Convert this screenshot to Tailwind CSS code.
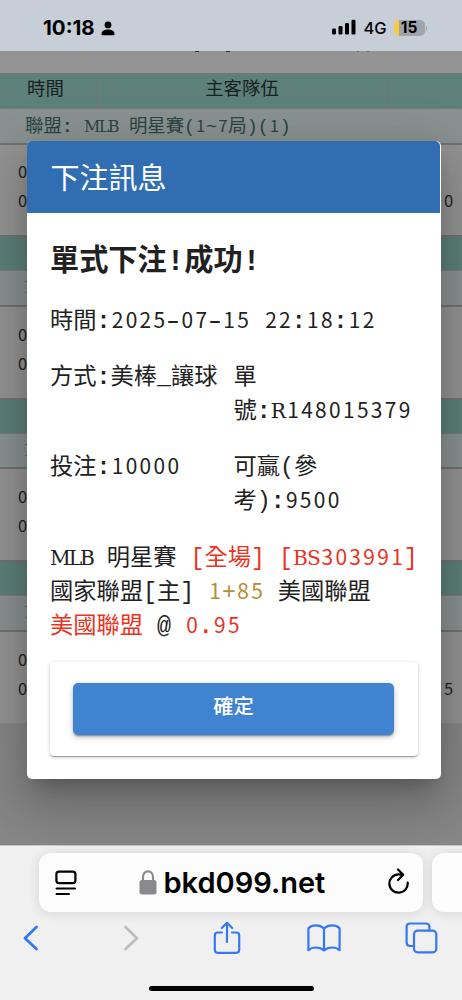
<!DOCTYPE html>
<html lang="zh-Hant">
<head>
<meta charset="utf-8">
<title>下注訊息</title>
<script src="https://cdn.jsdelivr.net/npm/@tailwindcss/browser@4"></script>
</head>
<body class="w-[462px] h-[1000px] overflow-hidden bg-[#868686]">
<!-- i = digit run, b = slab-serif letter run, s = heavier punctuation, em = wide dash -->
<div class="relative w-[462px] h-[1000px] flex flex-col overflow-hidden font-['Liberation_Mono','Noto_Sans_CJK_TC',monospace] [&_i]:not-italic [&_i]:font-['Noto_Sans_CJK_TC',sans-serif] [&_i]:text-[0.9em] [&_i]:leading-0 [&_i]:tracking-[0.1117em] [&_i]:pl-[0.06em] [&_i]:mr-[-0.06em] [&_b]:font-normal [&_b]:font-['DejaVu_Serif',serif] [&_b]:text-[0.87em] [&_b]:leading-0 [&_s]:no-underline [&_s]:font-bold [&_s]:leading-0 [&_em]:not-italic [&_em]:inline-block [&_em]:scale-x-150">

  <header class="h-[51px] shrink-0 bg-[#c8ced7] flex items-start justify-between pl-[43px] pr-[35px] pt-[16px] font-['Inter',sans-serif] text-black">
    <div class="flex items-center h-6 gap-[6px]">
      <span class="text-[20.5px] font-bold leading-6 tracking-[0px]">10:18</span>
      <svg class="w-[14px] h-[15px]" viewBox="0 0 14 15"><circle cx="7" cy="3.9" r="3.4"/><path d="M.5 13.2C.5 10 3 8.500 7 8.500s6.500 1.500 6.500 4.700c0 .7-.4 1.100-1.100 1.100H1.600c-.7 0-1.100-.4-1.100-1.100Z"/></svg>
    </div>
    <div class="flex items-center h-6">
      <svg class="w-[25px] h-[16px] mt-[-2px]" viewBox="0 0 25 16"><rect x="0" y="9.500" width="4" height="6" rx="1.200"/><rect x="6.500" y="7" width="4" height="8.500" rx="1.200"/><rect x="13" y="4" width="4" height="11.500" rx="1.200"/><rect x="19.500" y="0.700" width="4" height="14.800" rx="1.200"/></svg>
      <span class="ml-[7px] text-[16.5px] leading-6 font-medium w-[23px]">4G</span>
      <span class="ml-[7px] w-[31px] h-4 rounded-[5px] bg-linear-to-r from-[#f5cb45] from-[16%] to-[#a0a3aa] to-[16%] flex items-center justify-center text-[15.5px] font-bold">15</span>
      <span class="ml-px w-[1.5px] h-[5px] rounded-r bg-[#a0a3aa]"></span>
    </div>
  </header>

  <main class="h-[793.500px] shrink-0 bg-[#868686] text-[18.4px] text-[#242424] leading-[29px]">
    <div class="h-[21.500px] bg-[#949494] flex items-start">
      <span class="ml-[195px] w-1 h-px bg-[#333]"></span><span class="ml-[27px] w-1 h-px bg-[#333]"></span>
      <span class="ml-[127px] w-[2px] h-px bg-[#666]"></span><span class="ml-[8px] w-[2px] h-px bg-[#666]"></span>
    </div>
    <section class="h-[162.500px] bg-[#939393]">
      <div class="h-[35.500px] bg-[#5d807a] border-t border-[#737373] flex leading-[33px] text-[#191f1e] text-center">
        <div class="w-[97px] border-r border-[#737373] pr-[5px]">時間</div>
        <div class="w-[291px] border-r border-[#737373]">主客隊伍</div>
      </div>
      <div class="h-[36.500px] bg-[#8a9291] border-t border-b-2 border-t-[#7b7b7b] border-b-[#717171] pl-[25px] leading-[37px] text-[#294543] whitespace-pre">聯盟<s>:</s> <b class="tracking-[-0.1em]">MLB</b> 明星賽(<i>1</i>~<i>7</i>局)(<i>1</i>)</div>
      <div class="flex justify-between pl-[17px] pr-[8px] pt-[14px]"><div><i>0</i><br><i>0</i></div><div class="pt-[29px]"><i>0</i></div></div>
    </section>
    <section class="h-[162.500px] bg-[#939393]">
      <div class="h-[35px] bg-[#5d807a] border-t-2 border-[#737373]"></div>
      <div class="h-[36.500px] bg-[#8a9291] border-t border-b-2 border-t-[#7b7b7b] border-b-[#717171] pl-[25px] leading-[35px] text-[#294543]"><b>M</b></div>
      <div class="pl-[17px] pt-[15px]"><i>0</i><br><i>0</i></div>
    </section>
    <section class="h-[162.500px] bg-[#939393]">
      <div class="h-[35px] bg-[#5d807a] border-t-2 border-[#737373]"></div>
      <div class="h-[36.500px] bg-[#8a9291] border-t border-b-2 border-t-[#7b7b7b] border-b-[#717171] pl-[25px] leading-[35px] text-[#294543]"><b>M</b></div>
      <div class="pl-[17px] pt-[15px]"><i>0</i><br><i>0</i></div>
    </section>
    <section class="h-[162.500px] bg-[#939393]">
      <div class="h-[35px] bg-[#5d807a] border-t-2 border-[#737373]"></div>
      <div class="h-[36.500px] bg-[#8a9291] border-t border-b-2 border-t-[#7b7b7b] border-b-[#717171] pl-[25px] leading-[35px] text-[#294543]"><b>M</b></div>
      <div class="flex justify-between pl-[17px] pr-[8px] pt-[15px]"><div><i>0</i><br><i>0</i></div><div class="pt-[29px]"><i>5</i></div></div>
    </section>
  </main>

  <!-- dialog -->
  <div role="dialog" class="absolute left-[27px] top-[141px] w-[413.500px] h-[638px] rounded-[5px] bg-white overflow-visible text-[23.25px] text-[#212121] leading-[33.500px] shadow-[0_12px_17px_-8px_rgba(0,0,0,.2),0_27px_43px_3px_rgba(0,0,0,.14),0_10px_52px_9px_rgba(0,0,0,.12)]">
    <h1 class="h-[72px] w-[413px] rounded-t-[5px] bg-[#316db1] text-white text-[29px] leading-[71px] pl-[23.500px] font-['Noto_Sans_CJK_TC',sans-serif] font-normal">下注訊息</h1>
    <div class="px-[23px] flex flex-col">
      <h2 class="mt-[29px] h-[42px] text-[29.2px] leading-[42px] font-bold">單式下注!成功!</h2>
      <p class="mt-[22px] whitespace-pre">時間<s>:</s><i>2025</i><em>-</em><i>07</i><em>-</em><i>15</i> <i>22</i><s>:</s><i>18</i><s>:</s><i>12</i></p>
      <div class="mt-[21px] grid grid-cols-[183.500px_1fr] leading-[34px]">
        <p class="whitespace-nowrap">方式<s>:</s>美棒_讓球</p>
        <p>單<br>號<s>:</s><b>R</b><i>148015379</i></p>
      </div>
      <div class="mt-[22px] grid grid-cols-[183.500px_1fr] leading-[34px]">
        <p>投注<s>:</s><i>10000</i></p>
        <p>可贏(參<br>考)<s>:</s><i>9500</i></p>
      </div>
      <div class="mt-[23px] leading-[34px] whitespace-pre"><p><b class="tracking-[-0.1em]">MLB</b> 明星賽 <span class="text-[#ea3323]">[全場] [<b class="tracking-[-0.035em]">BS</b><i>303991</i>]</span></p><p>國家聯盟[主] <span class="text-[#b68d34]"><i>1</i>+<i>85</i></span> 美國聯盟</p><p><span class="text-[#ea3323]">美國聯盟</span> @ <span class="text-[#ea3323]"><i>0</i><s>.</s><i>95</i></span></p></div>
      <div class="mt-[18px] h-[94px] w-[368px] rounded-[4px] bg-white px-[23px] pt-[21px] shadow-[0_2px_1px_-1px_rgba(0,0,0,.2),0_1px_1px_0_rgba(0,0,0,.14),0_1px_4px_0_rgba(0,0,0,.2)]">
        <button class="block w-[321px] h-[52px] rounded-[5px] bg-[#4083d0] text-white text-[20.3px] leading-[45px] pb-[7px] font-medium font-['Noto_Sans_CJK_TC',sans-serif] shadow-[0_3px_1px_-2px_rgba(0,0,0,.2),0_2px_2px_0_rgba(0,0,0,.14),0_2px_7px_0_rgba(0,0,0,.22)]">確定</button>
      </div>
    </div>
  </div>

  <footer class="relative flex-1 bg-[#f0f0f0] border-t border-[#c8c8c8] flex flex-col items-center">
    <div class="self-stretch mt-[7.500px] flex gap-[9px] pl-[39px]">
      <div class="w-[384px] h-[59px] shrink-0 rounded-[12px] bg-[#fcfcfc] shadow-[0_1px_12px_rgba(0,0,0,.12)] flex items-center pl-[16px]">
        <svg class="w-[22px] h-[26px]" viewBox="0 0 22 26" fill="none" stroke="#000" stroke-width="2.200" stroke-linecap="round"><rect x="1.400" y="1.600" width="19" height="11.500" rx="2.600"/><path d="M1.500 18.500h18.500M1.500 24h12.500" stroke-width="2"/></svg>
        <svg class="ml-[62px] w-[18px] h-[25px]" viewBox="0 0 18 25"><path d="M4 12V7c0-3.400 2-5.600 5-5.600S14 3.600 14 7v5" fill="none" stroke="#8a8a8d" stroke-width="2.100"/><rect x=".5" y="10" width="17" height="14.500" rx="2.500" fill="#8a8a8d"/></svg>
        <span class="ml-[6.5px] w-[162px] font-['Inter',sans-serif] font-semibold text-[29px] leading-9 tracking-[0px] text-black whitespace-nowrap">bkd099.net</span>
        <svg class="ml-[61px] mt-[-3px] w-[23px] h-[26px]" viewBox="0 0 23 26" fill="none" stroke="#000" stroke-width="2.200" stroke-linecap="round" stroke-linejoin="round"><path d="M20.700 14.500A9.200 9.200 0 1 1 11.500 6.300c1.800 0 3.300.2 4.600.6M11 1.500l5.200 5.300L11 12"/></svg>
      </div>
      <div class="w-[60px] h-[59px] shrink-0 rounded-[12px] bg-[#fcfcfc] shadow-[0_1px_12px_rgba(0,0,0,.12)]"></div>
    </div>
    <nav class="self-stretch mt-[8px] h-[36px] pl-[22px] flex items-center text-[#3478f6]">
      <svg class="w-[18px] h-[26px] shrink-0" viewBox="0 0 18 26" fill="none" stroke="currentColor" stroke-width="2.800" stroke-linecap="round" stroke-linejoin="round"><path d="M14.500 2 3 13.200 14.500 24"/></svg>
      <svg class="w-[18px] h-[26px] shrink-0 ml-[82px] text-[#bdbdbd]" viewBox="0 0 18 26" fill="none" stroke="currentColor" stroke-width="2.800" stroke-linecap="round" stroke-linejoin="round"><path d="M3.500 2 15 13.200 3.500 24"/></svg>
      <svg class="w-[28px] h-[34px] shrink-0 ml-[73px]" viewBox="0 0 28 34" fill="none" stroke="currentColor" stroke-width="2.200" stroke-linecap="round" stroke-linejoin="round"><path d="M9 11.500H4.800c-1.900 0-3 1.100-3 3v14.300c0 1.900 1.100 3 3 3h18.400c1.900 0 3-1.100 3-3V14.500c0-1.900-1.100-3-3-3H19M14 21V2M8.800 7 14 1.800 19.200 7"/></svg>
      <svg class="w-[34px] h-[28px] shrink-0 ml-[66px]" viewBox="0 0 34 28" fill="none" stroke="currentColor" stroke-width="2.200" stroke-linecap="round" stroke-linejoin="round"><path d="M17 4.500C14.500 2.200 12 1.400 9 1.400S3.500 2.200 1.400 4.200v22C3.500 24.300 6 23.500 9 23.500s5.500.7 8 3c2.500-2.300 5-3 8-3s5.500.8 7.600 2.700v-22C30.500 2.200 28 1.400 25 1.400s-5.500.8-8 3.100ZM17 4.500v22"/></svg>
      <svg class="w-[33px] h-[32px] shrink-0 ml-[64px]" viewBox="0 0 33 32" fill="none" stroke="currentColor" stroke-width="2.200"><path d="M9 24H5c-2.200 0-3.400-1.200-3.400-3.400V4.900C1.600 2.700 2.800 1.500 5 1.500h16c2.200 0 3.400 1.200 3.400 3.400v3.500"/><rect x="9" y="8.600" width="22.300" height="21.800" rx="3.600"/></svg>
    </nav>
    <div class="mt-[30px] w-[165px] h-[5px] rounded-full bg-black"></div>
  </footer>
</div>
</body>
</html>
